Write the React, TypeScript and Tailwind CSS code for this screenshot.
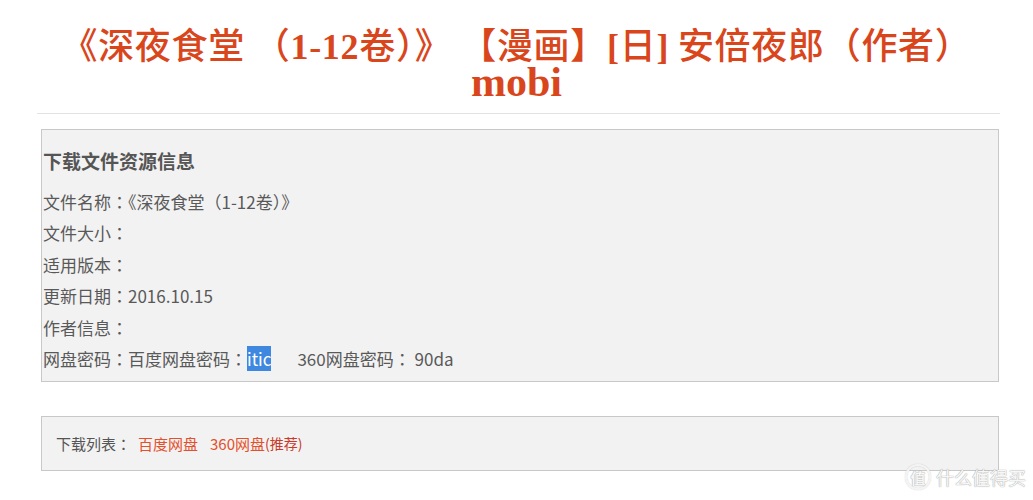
import React from "react";

const P = ({ children }: { children: React.ReactNode }) => (
  <span style={{ fontFamily: '"Noto Sans CJK TC", "Noto Sans CJK SC", sans-serif' }}>{children}</span>
);

export default function App() {
  const body = { fontFamily: '"Noto Sans CJK SC", "Noto Sans", sans-serif' };
  const serif = { fontFamily: '"Liberation Serif", serif' };
  return (
    <div className="w-[1033px] h-[500px] bg-white overflow-hidden relative" style={body}>
      <div className="pt-[23px] px-[37px] w-full">
        <h1 className="text-center font-medium text-[#d9461c]">
          <div className="h-[40px] text-[36px] leading-[40px] tracking-[0.7px] whitespace-nowrap">
            <P>《</P>深夜食堂 <P>（</P>
            <span className="font-bold" style={serif}>1-12</span>卷<P>）》</P> <P>【</P>漫画<P>】</P>
            <span className="font-bold" style={serif}>[</span>日<span className="font-bold" style={serif}>]</span> 安倍夜郎<P>（</P>作者<P>）</P>
          </div>
          <div className="h-[38px] font-bold text-[42px] leading-[38px]" style={serif}>mobi</div>
        </h1>
        <div className="mt-[12px] h-px bg-[#e2e2e2] w-[963px]" />
        <div className="mt-[15px] ml-[4px] w-[958px] border border-[#c8c8c8] bg-[#f2f2f2] pt-[16px] pb-[7px] pl-px">
          <div className="text-[19px] leading-[30px] font-bold text-[#555] mb-[10px]">下载文件资源信息</div>
          <div className="text-[17px] leading-[31.4px] text-[#595959]">
            <div>文件名称<P>：《</P>深夜食堂<P>（</P>1-12卷<P>）》</P></div>
            <div>文件大小<P>：</P></div>
            <div>适用版本<P>：</P></div>
            <div>更新日期<P>：</P>2016.10.15</div>
            <div>作者信息<P>：</P></div>
            <div>
              网盘密码<P>：</P>百度网盘密码<P>：</P><span className="bg-[#3f88e0] text-white">itic</span>
              <span className="ml-[26px]">360网盘密码<P>：</P> 90da</span>
            </div>
          </div>
        </div>
        <div className="mt-[34px] ml-[4px] w-[958px] h-[55px] border border-[#c8c8c8] bg-[#f2f2f2] flex items-center pl-[14px] text-[15px] text-[#555]">
          <span>下载列表<P>：</P></span>
          <span className="ml-[7px] text-[#e4502c]">百度网盘</span>
          <span className="ml-[12px] text-[#e4502c]">360网盘</span>
          <span className="text-[#c93a2a] text-[14px]">(推荐)</span>
        </div>
      </div>
      <div
        className="absolute left-[905px] top-[464px] flex items-center gap-[5px] text-[#f7f7f7] whitespace-nowrap"
        style={{ textShadow: "0 0 1px #a8a8a8, 0 0 1px #a8a8a8" }}
      >
        <div
          className="w-[26px] h-[26px] rounded-full border-2 border-[#f4f4f4] flex items-center justify-center text-[15px] leading-none font-bold"
          style={{ boxShadow: "0 0 1px #a8a8a8, inset 0 0 1px #a8a8a8" }}
        >
          值
        </div>
        <span className="text-[18px] leading-none">什么值得买</span>
      </div>
    </div>
  );
}
